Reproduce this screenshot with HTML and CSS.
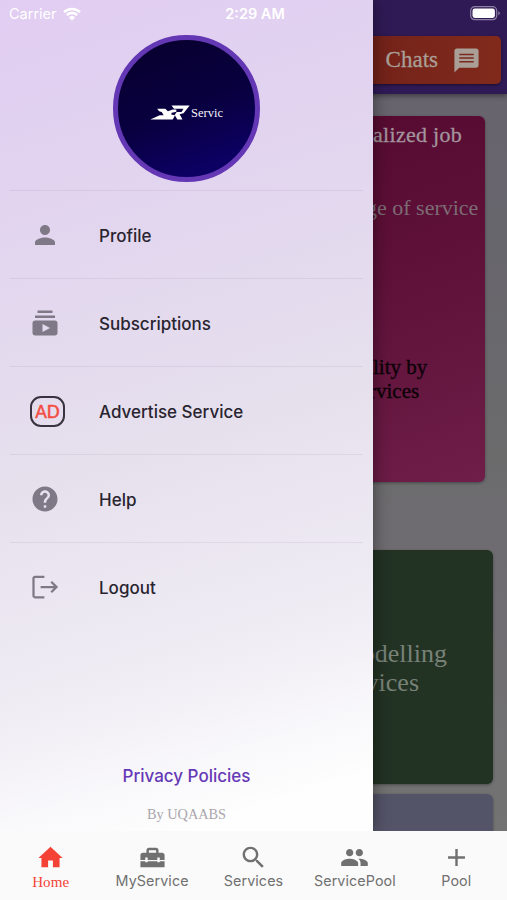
FILE: index.html
```html
<!DOCTYPE html>
<html lang="en">
<head>
  <meta charset="UTF-8">
  <meta name="viewport" content="width=device-width, initial-scale=1">
  <title>Servic</title>
  <link rel="stylesheet" href="styles.css">
</head>
<body>

<div class="app">
  <div class="page">
    <header class="topbar">
      <div class="chats">
        <span>Chats</span>
        <svg width="29" height="29" viewBox="0 0 24 24"><path fill="currentColor" d="M20 2H4c-1.1 0-2 .9-2 2v18l4-4h14c1.100 0 2-.9 2-2V4c0-1.100-.9-2-2-2z"/><path d="M6 7h12M6 10h12M6 13h12" stroke="#7b2a1c" stroke-width="1.300"/></svg>
      </div>
    </header>
    <div class="card pink">
      <p class="job">alized job</p>
      <p class="range">ge of service</p>
      <p class="quality">lity by</p>
      <p class="quality second">rvices</p>
    </div>
    <div class="card green">
      <p class="model">odelling</p>
      <p class="model second">vices</p>
    </div>
    <div class="card slate"></div>
  </div>

  <aside class="drawer">
    <div class="avatar">
      <svg class="logo" width="40" height="15" viewBox="0 0 123 45"><path d="M1 44 30 31h12L36 21l-8-2-6-8h25l8 8 15-6h11v7l-14 3-2 6 12 2-7 13z"/><path d="M66 1h56l-19 24-12 3 9 16H84l-8-14 6-9h15l6-10H74z"/></svg>
      <span>Servic</span>
    </div>
    <ul class="menu">
      <li>
        <svg class="icon" viewBox="0 0 24 24"><path d="M12 12c2.210 0 4-1.790 4-4s-1.790-4-4-4-4 1.790-4 4 1.790 4 4 4zm0 2c-2.670 0-8 1.340-8 4v2h16v-2c0-2.660-5.330-4-8-4z"/></svg>
        <span>Profile</span>
      </li>
      <li>
        <svg class="icon" viewBox="0 0 24 24"><path d="M20 8H4V6h16v2zm-2-6H6v2h12V2zm4 10v8c0 1.100-.9 2-2 2H4c-1.100 0-2-.9-2-2v-8c0-1.100.9-2 2-2h16c1.100 0 2 .9 2 2zm-6 4-6-3.270v6.530L16 16z"/></svg>
        <span>Subscriptions</span>
      </li>
      <li>
        <b class="ad">AD</b>
        <span>Advertise Service</span>
      </li>
      <li>
        <svg class="icon" viewBox="0 0 24 24"><path d="M12 2C6.480 2 2 6.480 2 12s4.480 10 10 10 10-4.480 10-10S17.520 2 12 2zm1 17h-2v-2h2v2zm2.070-7.750-.9.920C13.450 12.900 13 13.500 13 15h-2v-.5c0-1.100.45-2.100 1.170-2.830l1.240-1.260c.37-.36.590-.860.590-1.410 0-1.100-.9-2-2-2s-2 .9-2 2H8c0-2.210 1.790-4 4-4s4 1.790 4 4c0 .88-.36 1.680-.930 2.250z"/></svg>
        <span>Help</span>
      </li>
      <li>
        <svg class="icon line" viewBox="0 0 24 24"><path d="M11.500 3.800H4a1.200 1.200 0 0 0-1.200 1.200v14A1.200 1.200 0 0 0 4 20.200h7.500M8.500 12H21M17 7.800l4.200 4.200L17 16.200"/></svg>
        <span>Logout</span>
      </li>
    </ul>
    <div class="drawer-footer">
      <a class="privacy">Privacy Policies</a>
      <p class="by">By UQAABS</p>
    </div>
  </aside>

  <div class="statusbar">
    <div class="carrier">
      <span>Carrier</span>
      <svg width="18" height="14" viewBox="0 0 18 14"><path d="M1 5.200a11.500 11.500 0 0 1 16 0M3.800 8.200a7.500 7.500 0 0 1 10.400 0" fill="none" stroke="#fff" stroke-width="2.500"/><path d="M9 13.500 5.900 10.400a4.400 4.400 0 0 1 6.200 0z" fill="#fff"/></svg>
    </div>
    <span class="time">2:29 AM</span>
    <svg class="battery" width="31" height="15" viewBox="0 0 31 15"><rect x=".7" y=".7" width="26" height="13" rx="4" fill="none" stroke="#8d81a3" stroke-width="1.200"/><rect x="2.500" y="2.500" width="22.400" height="9.400" rx="2.300" fill="#fff"/><path d="M28.300 5v4.500q3-2.200 0-4.500z" fill="#8d81a3"/></svg>
  </div>
</div>

<nav class="tabs">
  <a class="tab active">
    <svg viewBox="0 0 24 24"><path d="M10 20v-5.500h4V20h5.500v-7.500H22L12 3 2 12.500h2.500V20z"/></svg>
    <span>Home</span>
  </a>
  <a class="tab">
    <svg viewBox="0 0 24 24"><path d="M18 16h-2v-1H8v1H6v-1H2v5h20v-5h-4v1zm2-8h-3V6c0-1.100-.9-2-2-2H9c-1.100 0-2 .9-2 2v2H4c-1.100 0-2 .9-2 2v4h4v-2h2v2h8v-2h2v2h4v-4c0-1.100-.9-2-2-2zm-5 0H9V6h6v2z"/></svg>
    <span>MyService</span>
  </a>
  <a class="tab">
    <svg viewBox="0 0 24 24"><path d="M15.500 14h-.790l-.28-.27C15.410 12.590 16 11.110 16 9.500 16 5.910 13.090 3 9.500 3S3 5.910 3 9.500 5.910 16 9.500 16c1.610 0 3.090-.59 4.230-1.570l.27.28v.790l5 4.990L20.490 19l-4.990-5zm-6 0C7.010 14 5 11.990 5 9.500S7.010 5 9.500 5 14 7.010 14 9.500 11.990 14 9.500 14z"/></svg>
    <span>Services</span>
  </a>
  <a class="tab">
    <svg viewBox="0 0 24 24"><path d="M16 11c1.660 0 2.990-1.340 2.990-3S17.660 5 16 5s-3 1.340-3 3 1.340 3 3 3zm-8 0c1.660 0 2.990-1.340 2.990-3S9.660 5 8 5 5 6.340 5 8s1.340 3 3 3zm0 2c-2.330 0-7 1.170-7 3.500V19h14v-2.500c0-2.330-4.670-3.500-7-3.500zm8 0c-.29 0-.62.020-.97.050 1.160.84 1.970 1.970 1.970 3.450V19h6v-2.500c0-2.330-4.670-3.500-7-3.500z"/></svg>
    <span>ServicePool</span>
  </a>
  <a class="tab">
    <svg viewBox="0 0 24 24"><path d="M19 13h-6v6h-2v-6H5v-2h6V5h2v6h6v2z"/></svg>
    <span>Pool</span>
  </a>
</nav>

</body>
</html>
```

FILE: styles.css
```css
* {
  box-sizing: border-box;
}
body {
  margin: 0;
  width: 507px;
  height: 900px;
  overflow: hidden;
  font-family: Inter, "Liberation Sans", sans-serif;
}
p {
  margin: 0;
}
.app {
  position: relative;
  height: 831px;
  overflow: hidden;
}

/* page behind the drawer */
.page {
  display: flex;
  flex-direction: column;
  align-items: flex-end;
  height: 831px;
  background: linear-gradient(#67636e, #68666d 30%, #6b6b6c 55%, #6f6c71 65%, #737373);
  font-family: "Liberation Serif", serif;
}
.topbar {
  flex: none;
  width: 100%;
  height: 94px;
  padding: 36px 6px 0 0;
  display: flex;
  justify-content: flex-end;
  align-items: flex-start;
  background: #301a56;
  box-shadow: 0 2px 5px rgba(0, 0, 0, 0.4);
}
.chats {
  width: 180px;
  height: 48px;
  padding-right: 20px;
  display: flex;
  justify-content: flex-end;
  align-items: center;
  gap: 14px;
  border-radius: 5px;
  background: linear-gradient(90deg, #6e1f18, #812a1c);
  box-shadow: 0 1px 3px rgba(0, 0, 0, 0.5);
  color: #a99f97;
  font-size: 23px;
  -webkit-text-stroke: 0.3px #a99f97;
}
.card {
  flex: none;
  width: 180px;
  border-radius: 6px;
  box-shadow: 0 1px 3px rgba(0, 0, 0, 0.35);
}
.pink {
  height: 366px;
  margin: 22px 22px 0 0;
  padding: 6px 0 0 68px;
  background: linear-gradient(160deg, #560a30, #5f1139 45%, #6e1e48);
  white-space: nowrap;
}
.job {
  font-size: 22px;
  line-height: 26px;
  letter-spacing: 0.3px;
  color: #a2949d;
  -webkit-text-stroke: 0.3px #a2949d;
}
.range {
  margin: 47px 0 134px -7px;
  font-size: 22px;
  line-height: 26px;
  color: #7c6c75;
}
.quality {
  font-size: 21px;
  line-height: 24px;
  color: #0d0208;
  -webkit-text-stroke: 0.4px #0d0208;
}
.quality.second {
  margin-left: -4px;
}
.green {
  height: 234px;
  margin: 68px 14px 0 0;
  padding: 89px 46px 0 0;
  background: #223223;
  text-align: right;
}
.model {
  font-size: 26px;
  line-height: 29px;
  color: #788178;
}
.model.second {
  margin-right: 28px;
}
.slate {
  height: 60px;
  margin: 10px 14px 0 0;
  background: #545469;
}

/* drawer */
.drawer {
  position: absolute;
  top: 0;
  left: 0;
  width: 373px;
  height: 831px;
  padding-top: 35px;
  display: flex;
  flex-direction: column;
  align-items: center;
  background: linear-gradient(163deg, #e1cdf2 0%, #e2d5ef 25%, #e6e0ed 52%, #efecf4 75%, #fefefe 94%);
  box-shadow: 0 0 16px rgba(0, 0, 0, 0.45);
}
.avatar {
  flex: none;
  width: 147px;
  height: 147px;
  padding-top: 7px;
  display: flex;
  justify-content: center;
  align-items: center;
  gap: 1px;
  border: 5px solid #6438b4;
  border-radius: 50%;
  background: linear-gradient(160deg, #080030 10%, #08003f 50%, #0c0062 85%);
  color: #f4f2fa;
  font-family: "Liberation Serif", serif;
  font-size: 12.5px;
}
.avatar span {
  padding-top: 3px;
}
.logo {
  fill: #fff;
}
.menu {
  list-style: none;
  width: 353px;
  margin: 8px 0 0;
  padding: 0;
}
.menu li {
  height: 88px;
  padding: 1px 0 0 20px;
  display: grid;
  grid-template-columns: 69px 1fr;
  align-items: center;
  border-top: 1px solid rgba(60, 30, 80, 0.07);
  color: #29242f;
  font-size: 17px;
  font-weight: 500;
}
.menu span {
  padding-top: 2px;
}
.icon {
  width: 30px;
  height: 30px;
  fill: #7f7886;
}
.line {
  fill: none;
  stroke: #7f7886;
  stroke-width: 1.8;
}
.ad {
  width: 35px;
  height: 31px;
  display: flex;
  justify-content: center;
  align-items: center;
  border: 2px solid #39333f;
  border-radius: 11px;
  color: #f44c43;
  font-family: Lato, sans-serif;
  font-size: 17px;
  font-weight: 500;
  -webkit-text-stroke: 0.4px #f44c43;
}
.drawer-footer {
  margin-top: 136px;
  text-align: center;
}
.privacy {
  color: #6639b6;
  font-size: 17px;
  font-weight: 500;
}
.by {
  margin-top: 20px;
  color: #aaa6ad;
  font-family: "Liberation Serif", serif;
  font-size: 14.3px;
}

/* status bar lies over the drawer and the page */
.statusbar {
  position: absolute;
  top: 0;
  left: 0;
  width: 507px;
  height: 27px;
  padding: 0 6px 0 9px;
  display: grid;
  grid-template-columns: 1fr auto 1fr;
  align-items: center;
  color: #fff;
  font-size: 14.5px;
}
.carrier {
  display: flex;
  align-items: center;
  gap: 6px;
}
.time {
  font-weight: 600;
}
.battery {
  justify-self: end;
}

/* bottom tabs */
.tabs {
  height: 69px;
  display: grid;
  grid-template-columns: repeat(5, 1fr);
  background: #fafafa;
}
.tab {
  padding-top: 12px;
  display: flex;
  flex-direction: column;
  align-items: center;
  color: #707070;
  font-size: 14.3px;
  line-height: 17px;
  letter-spacing: 0.1px;
}
.tab svg {
  width: 29px;
  height: 29px;
  fill: currentColor;
}
.active {
  color: #f44336;
  font-family: "Liberation Serif", serif;
  font-size: 15px;
  line-height: 20px;
}
```
